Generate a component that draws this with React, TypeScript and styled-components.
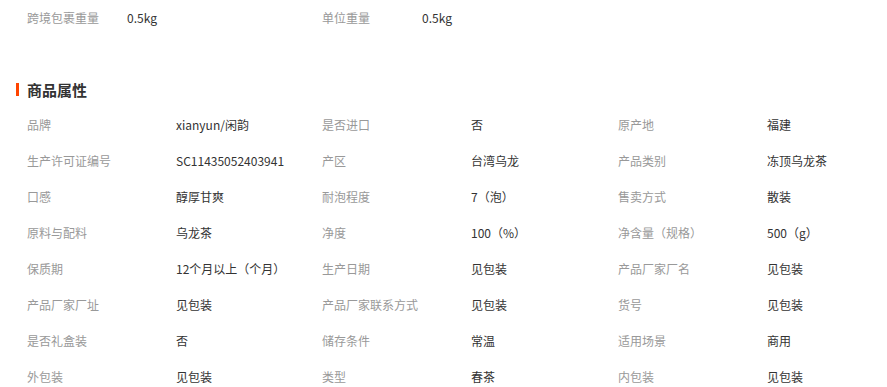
import { createGlobalStyle, styled } from "styled-components"

const GlobalStyle = createGlobalStyle`
  body {
    margin: 0;
    background: #fff;
    font-family: "Noto Sans CJK SC", "Liberation Sans", sans-serif;
    font-size: 12px;
  }
`

const Page = styled.div`
  width: 887px;
  height: 387px;
  overflow: hidden;
`

const WeightRow = styled.div`
  display: grid;
  grid-template-columns: 100px 195px 100px 195px;
  height: 36px;
  align-items: center;
  padding-left: 27px;
`

const SectionTitle = styled.h3`
  margin: 43px 0 8px 0;
  display: flex;
  align-items: center;
  gap: 8px;
  height: 20px;
  padding-left: 16px;
  font-size: 15px;
  font-weight: 700;
  color: #333;

  &::before {
    content: "";
    display: block;
    width: 3px;
    height: 13px;
    background: #ff4400;
  }
`

const AttrGrid = styled.div`
  display: grid;
  grid-template-columns: 149px 146px 149px 147px 149px auto;
  grid-auto-rows: 36px;
  align-items: center;
  padding-left: 27px;
`

const Cell = styled.span<{ $label?: boolean }>`
  color: ${(p) => (p.$label ? "#999" : "#333")};
  white-space: nowrap;
  line-height: 16px;
`

const weights = [
  ["跨境包裹重量", "0.5kg"],
  ["单位重量", "0.5kg"],
]

const attrs = [
  ["品牌", "xianyun/闲韵"],
  ["是否进口", "否"],
  ["原产地", "福建"],
  ["生产许可证编号", "SC11435052403941"],
  ["产区", "台湾乌龙"],
  ["产品类别", "冻顶乌龙茶"],
  ["口感", "醇厚甘爽"],
  ["耐泡程度", "7（泡）"],
  ["售卖方式", "散装"],
  ["原料与配料", "乌龙茶"],
  ["净度", "100（%）"],
  ["净含量（规格）", "500（g）"],
  ["保质期", "12个月以上（个月）"],
  ["生产日期", "见包装"],
  ["产品厂家厂名", "见包装"],
  ["产品厂家厂址", "见包装"],
  ["产品厂家联系方式", "见包装"],
  ["货号", "见包装"],
  ["是否礼盒装", "否"],
  ["储存条件", "常温"],
  ["适用场景", "商用"],
  ["外包装", "见包装"],
  ["类型", "春茶"],
  ["内包装", "见包装"],
]

export default function App() {
  return (
    <Page>
      <GlobalStyle />
      <WeightRow>
        {weights.map(([k, v]) => [
          <Cell $label key={k}>
            {k}
          </Cell>,
          <Cell key={k + "-v"}>{v}</Cell>,
        ])}
      </WeightRow>
      <SectionTitle>商品属性</SectionTitle>
      <AttrGrid>
        {attrs.map(([k, v]) => [
          <Cell $label key={k}>
            {k}
          </Cell>,
          <Cell key={k + "-v"}>{v}</Cell>,
        ])}
      </AttrGrid>
    </Page>
  )
}
